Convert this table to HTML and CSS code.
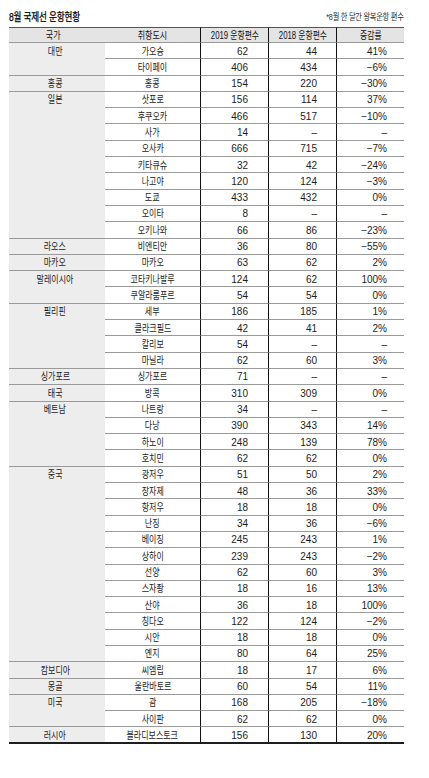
FILE: index.html
```html
<!DOCTYPE html>
<html lang="ko">
<head>
<meta charset="utf-8">
<title>8월 국제선 운항현황</title>
<link rel="stylesheet" href="styles.css">
</head>
<body>
<div class="wrap">
  <div class="caption">
    <h1 class="title"><span class="k">8월 국제선 운항현황</span></h1>
    <span class="note"><span class="k">*8월 한 달간 왕복운항 편수</span></span>
  </div>
  <div class="grid">
    <div class="h c1"><span class="k">국가</span></div><div class="h c2"><span class="k">취항도시</span></div><div class="h cn"><span class="k">2019 운항편수</span></div><div class="h cn"><span class="k">2018 운항편수</span></div><div class="h cn"><span class="k">증감률</span></div>

    <div class="cty s2"><span class="k">대만</span></div>
    <div class="city"><span class="k">가오슝</span></div><div class="n n3">62</div><div class="n n4">44</div><div class="n n5">41%</div>
    <div class="city"><span class="k">타이페이</span></div><div class="n n3">406</div><div class="n n4">434</div><div class="n n5">−6%</div>

    <div class="cty s1"><span class="k">홍콩</span></div>
    <div class="city"><span class="k">홍콩</span></div><div class="n n3">154</div><div class="n n4">220</div><div class="n n5">−30%</div>

    <div class="cty s9"><span class="k">일본</span></div>
    <div class="city"><span class="k">삿포로</span></div><div class="n n3">156</div><div class="n n4">114</div><div class="n n5">37%</div>
    <div class="city"><span class="k">후쿠오카</span></div><div class="n n3">466</div><div class="n n4">517</div><div class="n n5">−10%</div>
    <div class="city"><span class="k">사가</span></div><div class="n n3">14</div><div class="n n4">–</div><div class="n n5">–</div>
    <div class="city"><span class="k">오사카</span></div><div class="n n3">666</div><div class="n n4">715</div><div class="n n5">−7%</div>
    <div class="city"><span class="k">키타큐슈</span></div><div class="n n3">32</div><div class="n n4">42</div><div class="n n5">−24%</div>
    <div class="city"><span class="k">나고야</span></div><div class="n n3">120</div><div class="n n4">124</div><div class="n n5">−3%</div>
    <div class="city"><span class="k">도쿄</span></div><div class="n n3">433</div><div class="n n4">432</div><div class="n n5">0%</div>
    <div class="city"><span class="k">오이타</span></div><div class="n n3">8</div><div class="n n4">–</div><div class="n n5">–</div>
    <div class="city"><span class="k">오키나와</span></div><div class="n n3">66</div><div class="n n4">86</div><div class="n n5">−23%</div>

    <div class="cty s1"><span class="k">라오스</span></div>
    <div class="city"><span class="k">비엔티안</span></div><div class="n n3">36</div><div class="n n4">80</div><div class="n n5">−55%</div>

    <div class="cty s1"><span class="k">마카오</span></div>
    <div class="city"><span class="k">마카오</span></div><div class="n n3">63</div><div class="n n4">62</div><div class="n n5">2%</div>

    <div class="cty s2"><span class="k">말레이시아</span></div>
    <div class="city"><span class="k">코타키나발루</span></div><div class="n n3">124</div><div class="n n4">62</div><div class="n n5">100%</div>
    <div class="city"><span class="k">쿠알라룸푸르</span></div><div class="n n3">54</div><div class="n n4">54</div><div class="n n5">0%</div>

    <div class="cty s4"><span class="k">필리핀</span></div>
    <div class="city"><span class="k">세부</span></div><div class="n n3">186</div><div class="n n4">185</div><div class="n n5">1%</div>
    <div class="city"><span class="k">클라크필드</span></div><div class="n n3">42</div><div class="n n4">41</div><div class="n n5">2%</div>
    <div class="city"><span class="k">칼리보</span></div><div class="n n3">54</div><div class="n n4">–</div><div class="n n5">–</div>
    <div class="city"><span class="k">마닐라</span></div><div class="n n3">62</div><div class="n n4">60</div><div class="n n5">3%</div>

    <div class="cty s1"><span class="k">싱가포르</span></div>
    <div class="city"><span class="k">싱가포르</span></div><div class="n n3">71</div><div class="n n4">–</div><div class="n n5">–</div>

    <div class="cty s1"><span class="k">태국</span></div>
    <div class="city"><span class="k">방콕</span></div><div class="n n3">310</div><div class="n n4">309</div><div class="n n5">0%</div>

    <div class="cty s4"><span class="k">베트남</span></div>
    <div class="city"><span class="k">나트랑</span></div><div class="n n3">34</div><div class="n n4">–</div><div class="n n5">–</div>
    <div class="city"><span class="k">다낭</span></div><div class="n n3">390</div><div class="n n4">343</div><div class="n n5">14%</div>
    <div class="city"><span class="k">하노이</span></div><div class="n n3">248</div><div class="n n4">139</div><div class="n n5">78%</div>
    <div class="city"><span class="k">호치민</span></div><div class="n n3">62</div><div class="n n4">62</div><div class="n n5">0%</div>

    <div class="cty s12"><span class="k">중국</span></div>
    <div class="city"><span class="k">광저우</span></div><div class="n n3">51</div><div class="n n4">50</div><div class="n n5">2%</div>
    <div class="city"><span class="k">장자제</span></div><div class="n n3">48</div><div class="n n4">36</div><div class="n n5">33%</div>
    <div class="city"><span class="k">항저우</span></div><div class="n n3">18</div><div class="n n4">18</div><div class="n n5">0%</div>
    <div class="city"><span class="k">난징</span></div><div class="n n3">34</div><div class="n n4">36</div><div class="n n5">−6%</div>
    <div class="city"><span class="k">베이징</span></div><div class="n n3">245</div><div class="n n4">243</div><div class="n n5">1%</div>
    <div class="city"><span class="k">상하이</span></div><div class="n n3">239</div><div class="n n4">243</div><div class="n n5">−2%</div>
    <div class="city"><span class="k">선양</span></div><div class="n n3">62</div><div class="n n4">60</div><div class="n n5">3%</div>
    <div class="city"><span class="k">스자좡</span></div><div class="n n3">18</div><div class="n n4">16</div><div class="n n5">13%</div>
    <div class="city"><span class="k">산야</span></div><div class="n n3">36</div><div class="n n4">18</div><div class="n n5">100%</div>
    <div class="city"><span class="k">칭다오</span></div><div class="n n3">122</div><div class="n n4">124</div><div class="n n5">−2%</div>
    <div class="city"><span class="k">시안</span></div><div class="n n3">18</div><div class="n n4">18</div><div class="n n5">0%</div>
    <div class="city"><span class="k">옌지</span></div><div class="n n3">80</div><div class="n n4">64</div><div class="n n5">25%</div>

    <div class="cty s1"><span class="k">캄보디아</span></div>
    <div class="city"><span class="k">씨엠립</span></div><div class="n n3">18</div><div class="n n4">17</div><div class="n n5">6%</div>

    <div class="cty s1"><span class="k">몽골</span></div>
    <div class="city"><span class="k">울란바토르</span></div><div class="n n3">60</div><div class="n n4">54</div><div class="n n5">11%</div>

    <div class="cty s2"><span class="k">미국</span></div>
    <div class="city"><span class="k">괌</span></div><div class="n n3">168</div><div class="n n4">205</div><div class="n n5">−18%</div>
    <div class="city"><span class="k">사이판</span></div><div class="n n3">62</div><div class="n n4">62</div><div class="n n5">0%</div>

    <div class="cty s1 last"><span class="k">러시아</span></div>
    <div class="city last"><span class="k">블라디보스토크</span></div><div class="n n3 last">156</div><div class="n n4 last">130</div><div class="n n5 last">20%</div>
  </div>
</div>
</body>
</html>
```
FILE: styles.css
```css
* { box-sizing: border-box; }

html, body {
  margin: 0;
  padding: 0;
  background: #ffffff;
}

body {
  font-family: "Liberation Sans", "Noto Sans CJK KR", sans-serif;
  color: #1c1c1c;
}

.wrap {
  width: 395px;
  margin-left: 9px;
}

/* condensed look for Korean text */
.k {
  display: inline-block;
  white-space: nowrap;
  transform: scaleX(0.8);
}

.caption {
  display: flex;
  justify-content: space-between;
  align-items: center;
  height: 27px;
  padding-top: 7px;
}

.title {
  margin: 0;
  font-size: 11px;
  font-weight: normal;
  color: #000;
  line-height: 14px;
  -webkit-text-stroke: 0.25px #000;
}

.title .k {
  transform: scaleX(0.78);
  transform-origin: left center;
  letter-spacing: -0.2px;
}

.note {
  font-size: 9px;
  color: #2a2a2a;
  line-height: 12px;
}

.note .k {
  transform: scaleX(0.8);
  transform-origin: right center;
  letter-spacing: -0.3px;
}

.grid {
  display: grid;
  grid-template-columns: 96px 95px 68px 68px 68px;
  grid-template-rows: 16px;
  grid-auto-rows: 16.3px;
  font-size: 10px;
  line-height: 15px;
}

.grid > div {
  padding-top: 0.5px;
}

.h {
  background: #e4e4e4;
  border-top: 1px solid #555;
  border-bottom: 1px solid #9a9a9a;
  text-align: center;
  color: #111;
  line-height: 14px;
}

.h.c1 { padding-right: 8px; }
.h.cn { border-left: 1px solid #111; }
.h.cn .k { transform: scaleX(0.78); }

.cty {
  background: #ededed;
  border-bottom: 1px solid #9a9a9a;
  text-align: center;
  padding-right: 4px;
}

.s1 { grid-row: span 1; }
.s2 { grid-row: span 2; }
.s4 { grid-row: span 4; }
.s9 { grid-row: span 9; }
.s12 { grid-row: span 12; }

.city {
  border-bottom: 1px solid #9a9a9a;
  text-align: center;
}

.n {
  border-bottom: 1px solid #9a9a9a;
  border-left: 1px solid #111;
  text-align: right;
  position: relative;
}

.n3 { padding-right: 20px; }
.n4 { padding-right: 19px; }
.n5 { padding-right: 17px; }

.last {
  border-bottom: 2px solid #1e1e1e;
}

/* vertical rules poke slightly below the closing rule */
.n.last::after {
  content: "";
  position: absolute;
  left: -1px;
  bottom: -4px;
  width: 1px;
  height: 2px;
  background: #111;
}
```
